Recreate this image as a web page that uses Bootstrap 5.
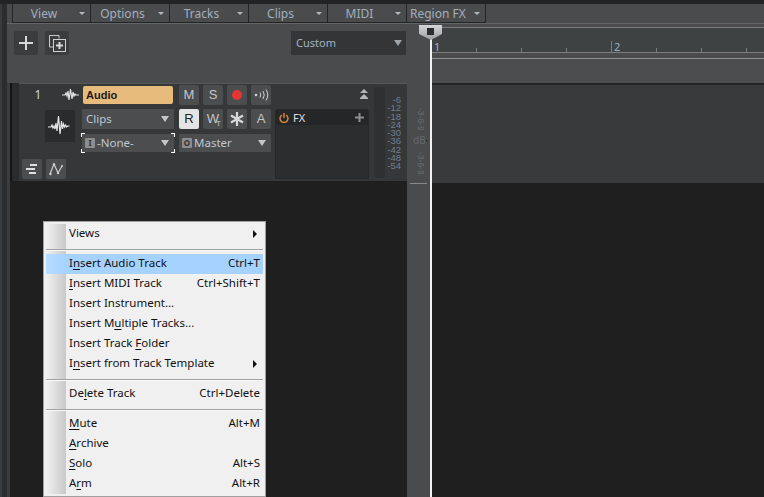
<!DOCTYPE html>
<html lang="en">
  <head>
    <meta charset="UTF-8" />
    <title>Track view</title>
    <link rel="stylesheet" href="https://cdn.jsdelivr.net/npm/bootstrap@5.3.0/dist/css/bootstrap.min.css" />
    <style>
      html, body { width: 764px; height: 497px; overflow: hidden; }
      body { background: #1f1f1f; font-family: "Noto Sans", sans-serif; font-size: 11.5px; color: #aab4c0; position: relative; }

      /* menu strip */
      .top-edge { height: 4px; background: #222324; }
      .edge-a { width: 2px; background: #3a3b3c; }
      .edge-b { width: 5px; background: #2b2c2d; }
      .menu-strip { height: 20px; background: #4a4b4d; border-bottom: 1px solid #646567; padding-left: 5px; }
      .menu-cell { width: 79px; height: 19px; border-right: 1px solid #232425; border-bottom: 1px solid #232425; color: #a3afbd; font-size: 12px; line-height: 15px; padding-right: 5px; }
      .menu-cell.first { border-left: 1px solid #232425; }
      .menu-cell .lbl { flex: 1; text-align: center; padding-right: 4px; }
      .menu-cell.region .lbl { text-align: left; padding: 0 0 0 3px; }
      .mini-tri { width: 0; height: 0; border-left: 3px solid transparent; border-right: 3px solid transparent; border-top: 3px solid #b4b8bc; }

      /* tool area */
      .edge-c { width: 3px; background: #3b3c3d; margin-top: 59px; }
      .tool-area { height: 59px; background: #4a4b4d; padding: 7px 0 0 7px; margin-left: -3px; }
      .tool-btn { width: 24px; height: 24px; background: #3a3c3e; border-radius: 2px; margin-right: 7px; }
      .preset { width: 115px; height: 24px; background: #333537; margin-left: auto; margin-right: 1px; padding: 0 4px 0 5px; color: #a3b3c3; font-size: 11px; }
      .big-tri { width: 0; height: 0; border-left: 4px solid transparent; border-right: 4px solid transparent; border-top: 6px solid #9ea3a8; margin-left: auto; }

      /* track */
      .track-panel { height: 98px; width: 397px; background: #363739; border-top: 1px solid #57585a; }
      .track-lead { width: 9px; margin-top: -1px; background: linear-gradient(90deg, #141414 2px, #2a2b2c 2px); }
      .col-a { width: 60px; padding-left: 3px; margin-right: 3px; }
      .col-b { width: 92px; margin-right: 5px; }
      .col-c { width: 92px; margin-right: 4px; }
      .col-d { width: 94px; margin-right: 5px; }
      .trk-no { width: 30px; text-align: center; color: #c8d8e6; font-size: 12px; padding-left: 2px; margin-right: 6px; line-height: 20px; }
      .wave-box { width: 30px; height: 32px; background: #2a2b2c; margin-left: 23px; margin-top: 5px; }
      .small-btn { width: 20px; height: 20px; background: #4b4d4f; border-radius: 2px; color: #c3c5c7; font-family: "Liberation Sans", sans-serif; font-size: 13px; line-height: 20px; text-align: center; position: relative; }
      .small-btn.on { background: #e4e4e4; color: #222; }
      .wt-mark { position: absolute; right: 2px; bottom: 1px; font-size: 8px; line-height: 8px; }
      .name-box { height: 18px; background: #e6bb7c; border-radius: 2px; color: #1a1a1a; font-family: "Liberation Sans", sans-serif; font-weight: 700; font-size: 11px; line-height: 18px; padding-left: 3px; margin: 2px 1px 0; }
      .sel-box { background: #4b4d4f; color: #bfc9d3; padding: 0 4px 0 4px; border-radius: 1px; }
      .sel-box .big-tri { border-left-width: 4px; border-right-width: 4px; border-top-width: 6px; border-top-color: #c4c6c8; margin-right: 1px; }
      .sel-clips { height: 20px; margin-top: 5px; }
      .sel-route { height: 18px; margin-top: 5px; position: relative; padding-left: 3px; }
      .route-tag { width: 10px; height: 10px; background: #8b8d8f; color: #333; font-size: 8px; line-height: 10px; text-align: center; font-weight: 700; margin-right: 2px; border-radius: 1px; }
      .focus-corner { position: absolute; width: 4px; height: 4px; border: 0 solid #fff; }
      .fc-tl { left: -1px; top: -1px; border-width: 1px 0 0 1px; }
      .fc-tr { right: -1px; top: -1px; border-width: 1px 1px 0 0; }
      .fc-bl { left: -1px; bottom: -1px; border-width: 0 0 1px 1px; }
      .fc-br { right: -1px; bottom: -1px; border-width: 0 1px 1px 0; }
      .collapse-row { height: 10px; padding-top: 5px; }
      .fx-bin { height: 70px; background: #2c2d2e; border: 1px solid #27282a; border-radius: 3px 3px 0 0; margin-top: 15px; }
      .fx-head { height: 15px; background: #252627; color: #d3e0ec; padding: 0 4px 0 3px; font-size: 11px; line-height: 15px; }
      .meter-bar { width: 11px; height: 91px; background: #2f3031; border-radius: 2px; margin-top: 3px; }
      .meter-marks { width: 16px; margin-top: 12px; font-family: "Liberation Sans", sans-serif; font-size: 9.500px; line-height: 8.250px; color: #6f7e8d; text-align: right; }

      /* fader column and timeline */
      .fader-col { width: 23px; background: #4a4b4d; position: relative; }
      .fader-marks { writing-mode: vertical-rl; font-family: "Liberation Sans", sans-serif; font-size: 8.500px; line-height: 9px; color: #6a6d70; height: 22px; margin-left: 9px; white-space: nowrap; overflow: hidden; }
      .db-row { color: #63696e; font-size: 10px; line-height: 10px; padding-left: 6px; height: 10px; margin: 5px 0 7px; }
      .db-tick { width: 3px; height: 1px; background: #111; }
      .fader-line { height: 1px; width: 17px; background: #85878a; margin: 9px 0 0 3px; }
      .timeline { width: 334px; margin-left: 0; border-left: 1px solid transparent; }
      .tl-cap { height: 3px; background: #4a4b4d; }
      .tl-rule { height: 1px; background: #7b7d7f; }
      .tl-ruler { height: 24px; background: #3f4243; }
      .tl-gap { height: 5px; background: #4a4b4d; }
      .tl-band { height: 24px; background: #4c4d4e; }
      .tl-dark { height: 2px; background: #232425; }
      .tl-track { height: 98px; background: #393a3b; }
      .beat-cell { width: 45px; flex: none; border-left: 1px solid #7b7d7f; height: 4px; margin-top: 20px; }
      .beat-cell.bar { height: 11px; margin-top: 13px; color: #9fb1c2; font-size: 11px; line-height: 11px; padding-left: 2px; }
      .playhead { position: absolute; left: 430px; top: 38px; bottom: 0; width: 2px; background: #f2f2f2; }
      .play-cap { position: absolute; left: 419px; top: 25px; }

      /* context menu */
      .ctx-menu.dropdown-menu { position: absolute; left: 43px; top: 221px; width: 223px; height: 276px; min-width: 0; margin: 0; padding: 2px 2px; background: #f0f0f0; border: 1px solid #a0a0a0; border-radius: 0; font-size: 11.500px; display: block; }
      .ctx-menu .dropdown-item { height: 20px; line-height: 18px; padding: 0 3px 0 23px; color: #111; background: linear-gradient(90deg, #f1f1f1 0, #c9c9c9 20px, #f0f0f0 20px); }
      .ctx-menu .dropdown-item.lit { background: linear-gradient(90deg, #b7dcff 0, #a6d2ff 20px); }
      .ctx-menu u { text-underline-offset: 2px; }
      .ctx-sep { height: 10px; background: linear-gradient(90deg, #f1f1f1 0, #c9c9c9 20px, #f0f0f0 20px); padding-top: 5px; }
      .ctx-sep div { height: 2px; background: linear-gradient(#a2a2a2 1px, #f8f8f8 1px); }
      .sub-tri { width: 0; height: 0; border-top: 4px solid transparent; border-bottom: 4px solid transparent; border-left: 4px solid #111; margin-right: 3px; align-self: center; }
    </style>
  </head>
  <body>
    <div class="top-edge"></div>
    <div class="d-flex" style="height: 493px">
      <div class="edge-a"></div>
      <div class="edge-b"></div>
      <div class="flex-grow-1 d-flex flex-column">
        <div class="menu-strip d-flex">
          <div class="menu-cell first d-flex align-items-center"><span class="lbl">View</span><span class="mini-tri"></span></div>
          <div class="menu-cell d-flex align-items-center"><span class="lbl">Options</span><span class="mini-tri"></span></div>
          <div class="menu-cell d-flex align-items-center"><span class="lbl">Tracks</span><span class="mini-tri"></span></div>
          <div class="menu-cell d-flex align-items-center"><span class="lbl">Clips</span><span class="mini-tri"></span></div>
          <div class="menu-cell d-flex align-items-center"><span class="lbl">MIDI</span><span class="mini-tri"></span></div>
          <div class="menu-cell region d-flex align-items-center"><span class="lbl">Region FX</span><span class="mini-tri"></span></div>
        </div>
        <div class="d-flex flex-grow-1">
          <div class="edge-c"></div>
          <div style="width: 397px">
            <div class="tool-area d-flex align-items-start">
              <div class="tool-btn d-flex align-items-center justify-content-center">
                <svg width="14" height="14" viewBox="0 0 14 14"><path d="M7 0v14M0 7h14" stroke="#d8d8d8" stroke-width="2"/></svg>
              </div>
              <div class="tool-btn d-flex align-items-center justify-content-center">
                <svg width="17" height="17" viewBox="0 0 17 17" fill="none"><path d="M10 3.500V.5H.5V12H4" stroke="#c8c8c8"/><rect x="4.500" y="4.500" width="12" height="12" stroke="#d0d0d0"/><path d="M10.500 7v7M7 10.500h7" stroke="#d8d8d8" stroke-width="2"/></svg>
              </div>
              <div class="preset d-flex align-items-center"><span>Custom</span><span class="big-tri"></span></div>
            </div>
            <div class="track-panel d-flex">
              <div class="track-lead"></div>
              <div class="col-a d-flex flex-column">
                <div class="d-flex align-items-center" style="height: 21px">
                  <div class="trk-no">1</div>
                  <svg width="17" height="14" viewBox="0 0 17 14" class="ms-1" fill="none"><path d="M0 7h3l1-2 1 3 1-5 1 9 1.500-11 1.500 10 1-7 1 4 1-2 1 1h3" stroke="#e2e2e2" stroke-width="1.200"/></svg>
                </div>
                <div class="wave-box d-flex align-items-center justify-content-center">
                  <svg width="24" height="22" viewBox="0 0 24 22" fill="none"><path d="M0 12h3l1-2 1 3 1-2 1 3 1-6 1 8 1.500-15 1.500 18 1.500-13 1 8 1-5 1 3 1-2 1 2 1-1h2" stroke="#e6e6e6" stroke-width="1.200"/></svg>
                </div>
                <div class="d-flex gap-1 mt-auto" style="margin-bottom: 2px">
                  <div class="small-btn d-flex align-items-center justify-content-center">
                    <svg width="12" height="10" viewBox="0 0 12 10"><path d="M4 1h7M0 5h9M3 9h7" stroke="#e0e0e0" stroke-width="2"/></svg>
                  </div>
                  <div class="small-btn d-flex align-items-center justify-content-center">
                    <svg width="14" height="14" viewBox="0 0 14 14" fill="none"><path d="M1 12 5 2l4 9 4-7" stroke="#cfcfcf" stroke-width="1.200"/><circle cx="1.500" cy="12" r="1.200" fill="#cfcfcf"/><circle cx="5" cy="2.500" r="1.200" fill="#cfcfcf"/><circle cx="9" cy="11" r="1.200" fill="#cfcfcf"/><circle cx="13" cy="4" r="1" fill="#cfcfcf"/></svg>
                  </div>
                </div>
              </div>
              <div class="col-b">
                <div class="name-box">Audio</div>
                <div class="sel-box sel-clips d-flex align-items-center"><span>Clips</span><span class="big-tri"></span></div>
                <div class="sel-box sel-route d-flex align-items-center">
                  <span class="route-tag">I</span><span>-None-</span><span class="big-tri"></span>
                  <i class="focus-corner fc-tl"></i><i class="focus-corner fc-tr"></i><i class="focus-corner fc-bl"></i><i class="focus-corner fc-br"></i>
                </div>
              </div>
              <div class="col-c">
                <div class="d-flex gap-1" style="margin-top: 1px">
                  <div class="small-btn">M</div>
                  <div class="small-btn">S</div>
                  <div class="small-btn d-flex align-items-center justify-content-center"><svg width="10" height="10"><circle cx="5" cy="5" r="5" fill="#e53535"/></svg></div>
                  <div class="small-btn d-flex align-items-center justify-content-center">
                    <svg width="15" height="12" viewBox="0 0 15 12" fill="none" stroke="#cfcfcf"><circle cx="2" cy="6" r="1.300" fill="#cfcfcf" stroke="none"/><path d="M6 3.500q1.500 2.500 0 5M9 2q2.500 4 0 8M12 .5q3.500 5.500 0 11"/></svg>
                  </div>
                </div>
                <div class="d-flex gap-1" style="margin-top: 4px">
                  <div class="small-btn on">R</div>
                  <div class="small-btn">W<span class="wt-mark">T</span></div>
                  <div class="small-btn d-flex align-items-center justify-content-center">
                    <svg width="14" height="14" viewBox="0 0 14 14"><path d="M7 0v14M1 3.500l12 7M13 3.500l-12 7" stroke="#d8d8d8" stroke-width="2.200"/></svg>
                  </div>
                  <div class="small-btn">A</div>
                </div>
                <div class="sel-box sel-route d-flex align-items-center">
                  <span class="route-tag">O</span><span>Master</span><span class="big-tri"></span>
                </div>
              </div>
              <div class="col-d">
                <div class="collapse-row d-flex justify-content-end">
                  <svg width="8" height="10" viewBox="0 0 8 10" style="margin-right: 1px"><path d="M4 0l4 4H0zM4 5l4 4H0z" fill="#b5b7b9"/><path d="M0 9.500h8" stroke="#b5b7b9"/></svg>
                </div>
                <div class="fx-bin">
                  <div class="fx-head d-flex align-items-center">
                    <svg width="10" height="10" viewBox="0 0 10 10" fill="none" stroke="#d98a3e" stroke-width="1.400" class="me-1"><path d="M3 2a4 4 0 1 0 4 0M5 0v5"/></svg>
                    <span>FX</span>
                    <svg width="9" height="9" viewBox="0 0 9 9" class="ms-auto"><path d="M4.500 0v9M0 4.500h9" stroke="#8d8f91" stroke-width="2"/></svg>
                  </div>
                </div>
              </div>
              <div class="meter-bar"></div>
              <div class="meter-marks">-6<br />-12<br />-18<br />-24<br />-30<br />-36<br />-42<br />-48<br />-54</div>
            </div>
          </div>
          <div class="fader-col">
            <div style="height: 84px"></div>
            <div class="fader-marks">-3-6-9</div>
            <div class="db-row d-flex align-items-center">dB<span class="db-tick ms-auto" style="margin-right: 3px"></span></div>
            <div class="fader-marks">-3-6-9</div>
            <div class="fader-line"></div>
          </div>
          <div class="timeline">
            <div class="tl-cap"></div>
            <div class="tl-rule"></div>
            <div class="tl-ruler d-flex">
              <div class="beat-cell bar">1</div><div class="beat-cell"></div><div class="beat-cell"></div><div class="beat-cell"></div>
              <div class="beat-cell bar">2</div><div class="beat-cell"></div><div class="beat-cell"></div><div class="beat-cell"></div>
            </div>
            <div class="tl-rule"></div>
            <div class="tl-gap"></div>
            <div class="tl-rule" style="background: #8f9092"></div>
            <div class="tl-band"></div>
            <div class="tl-dark"></div>
            <div class="tl-track"></div>
          </div>
        </div>
      </div>
    </div>

    <div class="playhead"></div>
    <svg class="play-cap" width="24" height="15" viewBox="0 0 24 15">
      <defs><linearGradient id="capFill" x1="0" y1="0" x2="0" y2="1"><stop offset="0" stop-color="#d4d6d8"/><stop offset="1" stop-color="#9b9ea1"/></linearGradient></defs>
      <path d="M0 0h23v9l-11 6L0 9z" fill="url(#capFill)"/>
      <rect x="8" y="3" width="7" height="7" fill="#2b2c2e"/>
    </svg>

    <ul class="ctx-menu dropdown-menu list-unstyled">
      <li><a class="dropdown-item d-flex" href="#"><span>Views</span><span class="sub-tri ms-auto"></span></a></li>
      <li class="ctx-sep"><div></div></li>
      <li><a class="dropdown-item lit d-flex" href="#"><span>I<u>n</u>sert Audio Track</span><span class="ms-auto">Ctrl+T</span></a></li>
      <li><a class="dropdown-item d-flex" href="#"><span><u>I</u>nsert MIDI Track</span><span class="ms-auto">Ctrl+Shift+T</span></a></li>
      <li><a class="dropdown-item d-flex" href="#"><span>Insert Instrument...</span></a></li>
      <li><a class="dropdown-item d-flex" href="#"><span>Insert M<u>u</u>ltiple Tracks...</span></a></li>
      <li><a class="dropdown-item d-flex" href="#"><span>Insert Track <u>F</u>older</span></a></li>
      <li><a class="dropdown-item d-flex" href="#"><span>I<u>n</u>sert from Track Template</span><span class="sub-tri ms-auto"></span></a></li>
      <li class="ctx-sep"><div></div></li>
      <li><a class="dropdown-item d-flex" href="#"><span>De<u>l</u>ete Track</span><span class="ms-auto">Ctrl+Delete</span></a></li>
      <li class="ctx-sep"><div></div></li>
      <li><a class="dropdown-item d-flex" href="#"><span><u>M</u>ute</span><span class="ms-auto">Alt+M</span></a></li>
      <li><a class="dropdown-item d-flex" href="#"><span><u>A</u>rchive</span></a></li>
      <li><a class="dropdown-item d-flex" href="#"><span><u>S</u>olo</span><span class="ms-auto">Alt+S</span></a></li>
      <li><a class="dropdown-item d-flex" href="#"><span>A<u>r</u>m</span><span class="ms-auto">Alt+R</span></a></li>
    </ul>

    <script src="https://cdn.jsdelivr.net/npm/bootstrap@5.3.0/dist/js/bootstrap.bundle.min.js"></script>
  </body>
</html>
